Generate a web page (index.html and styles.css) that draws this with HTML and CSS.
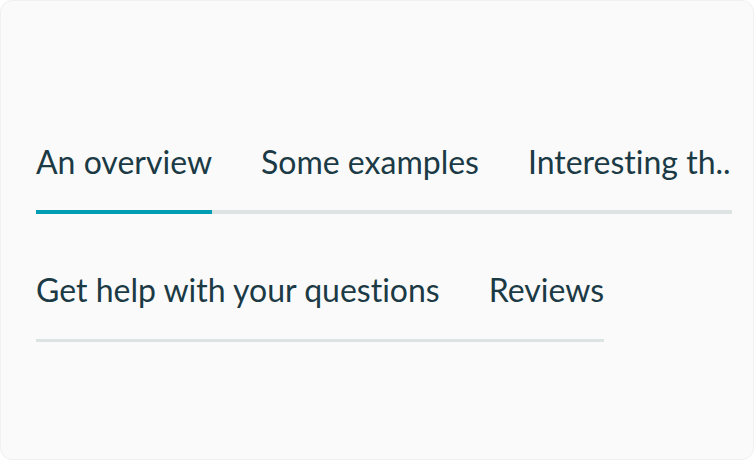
FILE: index.html
```html
<!DOCTYPE html>
<html lang="en">
<head>
<meta charset="utf-8">
<title>Tabs</title>
<link rel="stylesheet" href="styles.css">
</head>
<body>
<div class="card">
  <div class="tablist tablist-wide" role="tablist">
    <div class="tab active" role="tab">An overview</div>
    <div class="tab" role="tab">Some examples</div>
    <div class="tab tab-trunc" role="tab">Interesting th..</div>
  </div>
  <div class="tablist" role="tablist">
    <div class="tab" role="tab">Get help with your questions</div>
    <div class="tab" role="tab">Reviews</div>
  </div>
</div>
</body>
</html>
```
FILE: styles.css
```css
html, body {
  margin: 0;
  padding: 0;
  background: #ffffff;
}
.card {
  box-sizing: border-box;
  width: 754px;
  height: 460px;
  background: #fafafa;
  border: 1px solid #f0f0f0;
  border-radius: 12px;
  padding: 141px 35px 0;
  display: flex;
  flex-direction: column;
  align-items: flex-start;
  gap: 56px;
  font-family: "Lato", "Open Sans", sans-serif;
  font-variant-ligatures: none;
  color: #1b3a45;
}
.tablist {
  display: flex;
  gap: 49px;
  border-bottom: 3px solid #dde2e2;
}
.tablist-wide {
  width: 696px;
  border-bottom-width: 4px;
}
.tab {
  font-size: 32px;
  line-height: 40px;
  padding-bottom: 28px;
  margin-bottom: -3px;
  border-bottom: 4px solid transparent;
  white-space: nowrap;
}
.tablist-wide .tab {
  margin-bottom: -4px;
}
.tab.active {
  border-bottom-color: #009db3;
}
.tab-trunc {
  overflow: hidden;
  min-width: 0;
}
```
